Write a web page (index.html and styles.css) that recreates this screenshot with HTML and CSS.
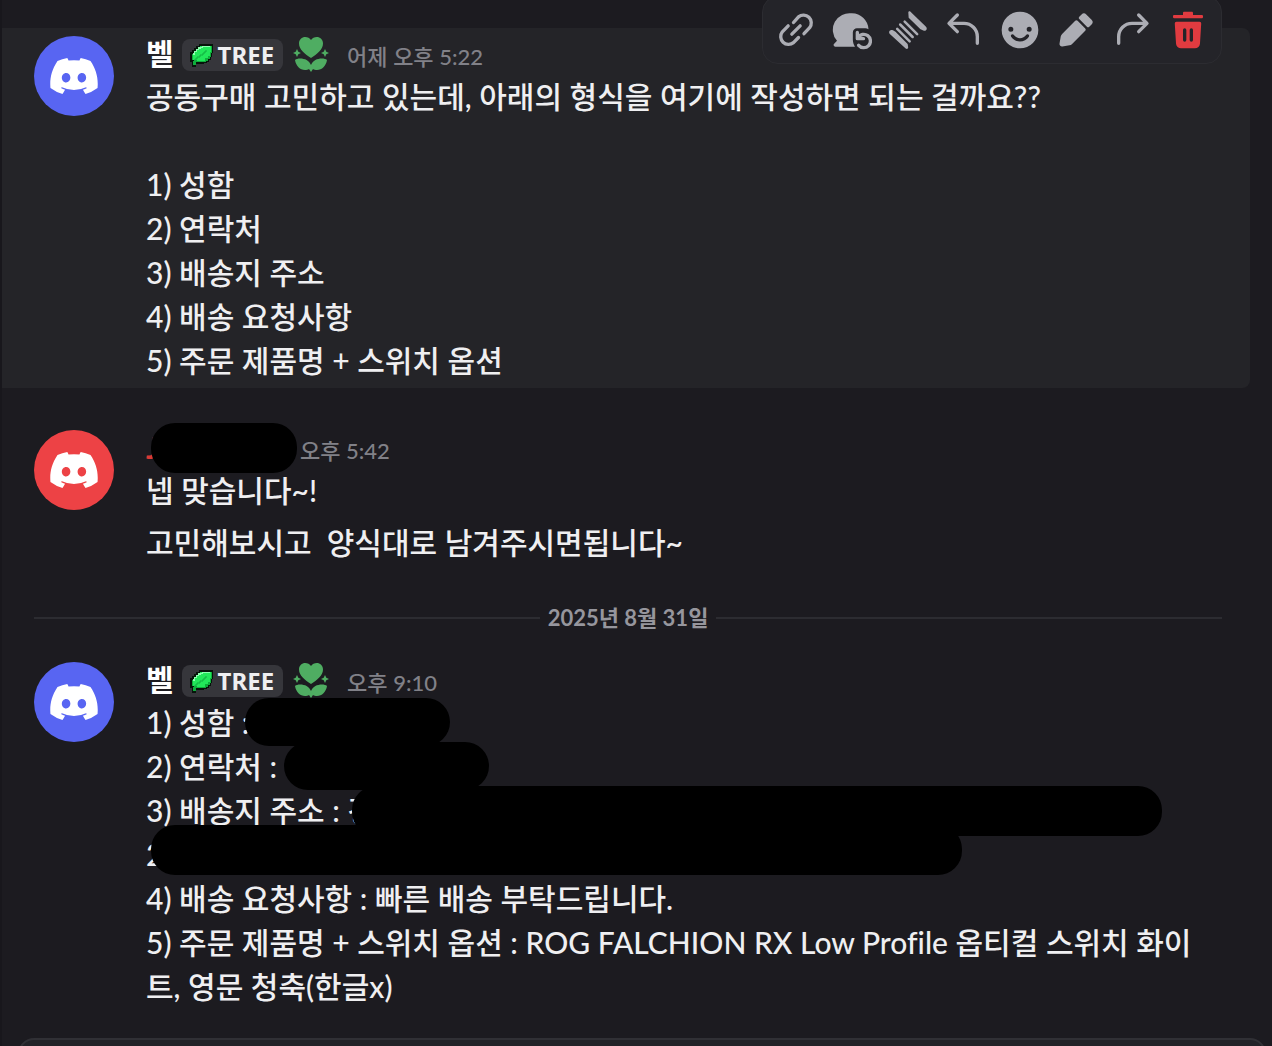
FILE: index.html
```html
<!DOCTYPE html>
<html lang="ko">
<head>
  <meta charset="UTF-8">
  <meta name="viewport" content="width=device-width, initial-scale=1.0">
  <title>Discord</title>
  <link rel="stylesheet" href="styles.css">
</head>
<body>

  <!-- Shared shapes -->
  <svg class="sprites" aria-hidden="true">
    <symbol id="clyde" viewBox="0 0 127.14 96.36">
      <path d="M107.7,8.07A105.15,105.15,0,0,0,81.47,0a72.06,72.06,0,0,0-3.36,6.83A97.68,97.68,0,0,0,49,6.83,72.37,72.37,0,0,0,45.64,0,105.89,105.89,0,0,0,19.39,8.09C2.79,32.65-1.71,56.6.54,80.21h0A105.73,105.73,0,0,0,32.71,96.36,77.7,77.7,0,0,0,39.6,85.25a68.42,68.42,0,0,1-10.85-5.18c.91-.66,1.8-1.34,2.66-2a75.57,75.57,0,0,0,64.32,0c.87.71,1.76,1.39,2.66,2a68.68,68.68,0,0,1-10.87,5.19,77,77,0,0,0,6.89,11.1A105.25,105.25,0,0,0,126.6,80.22h0C129.24,52.84,122.09,29.11,107.7,8.07ZM42.45,65.69C36.18,65.69,31,60,31,53s5-12.74,11.43-12.74S54,46,53.89,53,48.84,65.69,42.45,65.69Zm42.24,0C78.41,65.69,73.25,60,73.25,53s5-12.74,11.44-12.74S96.23,46,96.12,53,91.08,65.69,84.69,65.69Z"/>
    </symbol>
    <symbol id="leaf" viewBox="0 0 24 24">
      <path fill="#06140a" d="M9 1h14v9h-1v4h-1v3h-2v2h-2v1h-3v1H6v3H2v-5H0V9h2V7h2V5h2V3h3z"/>
      <path fill="#0fae3c" d="M10 3h12v7h-1v4h-1v2h-2v2h-2v1H6v3H3v-4h1v-1H2v-6h2V8h2V6h2V4h2z"/>
      <path fill="#22e85a" d="M10 3h11v6h-1v4h-2v2h-3v3H7v-1H3v-6h1V8h2V6h2V4h2z"/>
      <path fill="#8dffb0" d="M12 3h8v1h-7v1h-2v1H9v1H7v2H5v3H3v-2h1V8h2V6h2V4h4z"/>
      <path fill="none" stroke="#10b040" stroke-width="1" d="M5 18v-2h2v-2h3v-2h3v-2h2V8h2"/>
    </symbol>
    <symbol id="sprout" viewBox="0 0 36 36">
      <path d="M18 22C12 18 6 13.500 6 7.500 6 3.500 9 1 12.200 1 14.600 1 16.800 2 18 4c1.200-2 3.400-3 5.800-3C27 1 30 3.500 30 7.500c0 6-6 10.500-12 14.500z"/>
      <path d="M2 24c1-1 3-1.500 5-1.500 5 0 9 2 11 6.500 2-4.500 6-6.500 11-6.500 2 0 4 .5 5 1.500-1 6-5 10-10 10-1.500 0-3-.4-4-1l-2 3-2-3c-1 .6-2.500 1-4 1-5 0-9-4-10-10z"/>
      <path d="M4 13l1.300 2.700L8 17l-2.700 1.300L4 21l-1.300-2.700L0 17l2.700-1.300zM32 13l1.300 2.700L36 17l-2.700 1.300L32 21l-1.300-2.700L28 17l2.700-1.300z"/>
    </symbol>
  </svg>

  <main class="chat">
    <article class="message message-hover">
      <div class="avatar"><svg><use href="#clyde"/></svg></div>
      <div class="body">
        <header class="message-header">
          <span class="username">벨</span>
          <span class="tag"><svg><use href="#leaf"/></svg>TREE</span>
          <svg class="role-icon"><use href="#sprout"/></svg>
          <time>어제 오후 5:22</time>
        </header>
        <p>공동구매 고민하고 있는데, 아래의 형식을 여기에 작성하면 되는 걸까요??</p>
        <p><br></p>
        <p>1) 성함</p>
        <p>2) 연락처</p>
        <p>3) 배송지 주소</p>
        <p>4) 배송 요청사항</p>
        <p>5) 주문 제품명 + 스위치 옵션</p>
      </div>

      <div class="toolbar" role="toolbar">
        <button type="button" aria-label="링크 복사">
          <svg viewBox="0 0 24 24" class="line"><path d="M10.500 7.500l3-3.400a4.700 4.700 0 0 1 6.700 6.500l-3.400 3.600M13.500 16.500l-3 3.100a4.700 4.700 0 0 1-6.700-6.500l3.500-3.600M9.500 14.500l5-5"/></svg>
        </button>
        <button type="button" aria-label="읽지 않음으로 표시">
          <svg viewBox="0 0 24 24"><path d="M12 2a10 10 0 0 1 9.900 9.500c-.6-.3-1.300-.5-1.900-.5h-5a2.500 2.500 0 0 0-2.500 2.500v4c0 1.700.4 3.200 1.300 4.500H2c-1 0-1.400-1.100-.7-1.700L3 18.500A10 10 0 0 1 12 2z"/><path class="stroke" d="M15.200 13.500v3.700h3.700M15.600 16.600a4 4 0 1 1 .4 4.600"/></svg>
        </button>
        <button type="button" aria-label="스레드 만들기">
          <svg viewBox="0 0 24 24"><path d="M12.200 1.700c-.2-.8.700-1.300 1.300-.7l9.300 9c1.200 1.300-.1 3-1.600 2.300l-1.700-.8-7.100-6.900zM1 12.500c.5-.6 1.300-.7 2-.3l1.500.9 7.300 7.300.3 2c.1.900-.9 1.300-1.500.7L1.100 14.400c-.5-.5-.6-1.300-.1-1.900z"/><path class="stroke thin" d="M10 7l7.500 7.500M7.300 8.700l7.500 7.500M5.500 11.300l7.500 7.500"/></svg>
        </button>
        <button type="button" aria-label="답장">
          <svg viewBox="0 0 24 24" class="line"><path d="M8 3L3 8l5 5M3.500 8H12a8 8 0 0 1 8 8v4"/></svg>
        </button>
        <button type="button" aria-label="반응 추가">
          <svg viewBox="0 0 24 24"><path fill-rule="evenodd" d="M12 23a11 11 0 1 0 0-22 11 11 0 0 0 0 22zM6.500 13a1.500 1.500 0 1 0 0-3 1.500 1.500 0 0 0 0 3zm11 0a1.500 1.500 0 1 0 0-3 1.500 1.500 0 0 0 0 3zm-9.170 1.950a1 1 0 0 0-1.660 1.100 6.400 6.400 0 0 0 10.660 0 1 1 0 0 0-1.660-1.100 4.400 4.400 0 0 1-7.340 0z"/></svg>
        </button>
        <button type="button" aria-label="수정">
          <svg viewBox="0 0 24 24"><path d="M13.960 5.460l4.580 4.580a1 1 0 0 0 1.420 0l1.380-1.380a2 2 0 0 0 0-2.820l-3.180-3.180a2 2 0 0 0-2.820 0l-1.380 1.380a1 1 0 0 0 0 1.420zM2.110 20.160l.73-4.220a3 3 0 0 1 .83-1.610l7.870-7.870a1 1 0 0 1 1.420 0l4.580 4.580a1 1 0 0 1 0 1.420l-7.870 7.870a3 3 0 0 1-1.600.83l-4.230.73a1.500 1.500 0 0 1-1.730-1.730z"/></svg>
        </button>
        <button type="button" aria-label="전달">
          <svg viewBox="0 0 24 24" class="line"><path d="M16 3l5 5-5 5M20.500 8H12a8 8 0 0 0-8 8v4"/></svg>
        </button>
        <button type="button" class="danger" aria-label="삭제">
          <svg viewBox="0 0 24 24"><path d="M14.250 1c.41 0 .75.340.75.750V3h5.250c.41 0 .75.340.75.750v.5c0 .41-.34.750-.75.750H3.750A.75.750 0 0 1 3 4.250v-.5c0-.41.340-.75.750-.75H9V1.750c0-.41.340-.75.750-.75h4.500z"/><path fill-rule="evenodd" d="M5.060 7a1 1 0 0 0-1 1.060l.76 12.130a3 3 0 0 0 3 2.810h8.360a3 3 0 0 0 3-2.810l.75-12.130a1 1 0 0 0-1-1.060H5.060zM11 12a1 1 0 1 0-2 0v6a1 1 0 1 0 2 0v-6zm3-1a1 1 0 0 1 1 1v6a1 1 0 1 1-2 0v-6a1 1 0 0 1 1-1z"/></svg>
        </button>
      </div>
    </article>

    <article class="message message-start">
      <div class="avatar avatar-red"><svg><use href="#clyde"/></svg></div>
      <div class="body">
        <header class="message-header">
          <span class="username username-red">J<span class="redact redact-name"></span></span>
          <time>오후 5:42</time>
        </header>
        <p>넵 맞습니다~!</p>
      </div>
    </article>
    <article class="message message-compact">
      <div class="body">
        <p>고민해보시고&nbsp; 양식대로 남겨주시면됩니다~</p>
      </div>
    </article>

    <div class="divider"><span>2025년 8월 31일</span></div>

    <article class="message">
      <div class="avatar"><svg><use href="#clyde"/></svg></div>
      <div class="body">
        <header class="message-header">
          <span class="username">벨</span>
          <span class="tag"><svg><use href="#leaf"/></svg>TREE</span>
          <svg class="role-icon"><use href="#sprout"/></svg>
          <time>오후 9:10</time>
        </header>
        <p>1) 성함 :<span class="redact redact-person"></span></p>
        <p>2) 연락처 :<span class="redact redact-phone"></span></p>
        <p>3) 배송지 주소 : 경<span class="redact redact-address"></span></p>
        <p>2<span class="redact redact-address-end"></span></p>
        <p>4) 배송 요청사항 : 빠른 배송 부탁드립니다.</p>
        <p>5) 주문 제품명 + 스위치 옵션 : ROG FALCHION RX Low Profile 옵티컬 스위치 화이트, 영문 청축(한글x)</p>
      </div>
    </article>
  </main>

  <footer class="composer-area">
    <div class="composer"></div>
  </footer>

</body>
</html>
```

FILE: styles.css
```css
* {
  box-sizing: border-box;
}

body {
  margin: 0;
  height: 100vh;
  overflow: hidden;
  display: flex;
  flex-direction: column;
  background-color: #1c1b20;
  border-left: 2px solid #18171c;
  color: #efeff1;
  font-family: Lato, "Noto Sans CJK KR", sans-serif;
  font-size: 30px;
  font-weight: 500;
  font-variant-ligatures: none;
  line-height: 44px;
}

.sprites {
  display: none;
}

.chat {
  flex-shrink: 0;
  padding: 28px 22px 20px 0;
}

.message {
  position: relative;
  display: flex;
  gap: 32px;
  padding: 2px 48px 6px 32px;
}

.message-hover {
  background-color: #242428;
  border-radius: 0 8px 8px 0;
}

.message-start {
  margin-top: 34px;
}

.message-compact {
  padding-left: 144px;
}

.avatar {
  display: flex;
  flex-shrink: 0;
  align-items: center;
  justify-content: center;
  width: 80px;
  height: 80px;
  margin-top: 6px;
  border-radius: 50%;
  background-color: #5865f2;
}

.avatar-red {
  background-color: #ed4245;
}

.avatar svg {
  width: 48px;
  height: 36px;
  fill: #fff;
}

.body {
  flex: 1;
  min-width: 0;
}

.body p {
  position: relative;
  margin: 0;
  word-break: break-all;
}

.message-header {
  display: flex;
  align-items: center;
  height: 44px;
  padding-top: 2px;
}

.username {
  position: relative;
  font-weight: 700;
  color: #fff;
}

.username-red {
  width: 154px;
  color: #d83a35;
}

.tag {
  display: flex;
  align-items: center;
  gap: 4px;
  height: 32px;
  margin: 4px 0 0 8px;
  padding: 0 9px 0 8px;
  border-radius: 8px;
  background-color: #36363b;
  font-family: "Noto Sans", sans-serif;
  font-size: 24px;
  font-weight: 700;
}

.tag svg {
  width: 24px;
  height: 24px;
}

.role-icon {
  width: 36px;
  height: 36px;
  margin: 2px 18px 0 10px;
  fill: #4fad62;
}

time {
  color: #818188;
  font-size: 22px;
  padding-top: 8px;
}

/* Blacked-out private details */
.redact {
  position: absolute;
  top: -2px;
  height: 48px;
  border-radius: 24px;
  background-color: #000;
  z-index: 1;
}

.redact-name {
  left: 5px;
  width: 146px;
  height: 50px;
}

.redact-person {
  left: 99px;
  width: 205px;
}

.redact-phone {
  left: 138px;
  width: 205px;
}

.redact-address {
  left: 206px;
  width: 810px;
  height: 50px;
}

.redact-address-end {
  top: -7px;
  left: 5px;
  width: 811px;
  height: 50px;
}

.toolbar {
  position: absolute;
  top: -32px;
  right: 28px;
  display: flex;
  padding: 3px 5px;
  border: 1px solid #2c2c31;
  border-radius: 16px;
  background-color: #242429;
}

.toolbar button {
  width: 56px;
  height: 60px;
  padding: 4px 8px;
  border: none;
  background: none;
  color: #acadb4;
  cursor: pointer;
}

.toolbar .danger {
  color: #e13b40;
}

.toolbar svg {
  display: block;
  width: 40px;
  height: 40px;
  fill: currentColor;
}

.toolbar .line,
.toolbar .stroke {
  fill: none;
  stroke: currentColor;
  stroke-width: 2;
  stroke-linecap: round;
  stroke-linejoin: round;
}

.toolbar .thin {
  stroke-width: 1.500;
}

.divider {
  display: flex;
  align-items: center;
  gap: 8px;
  margin: 26px 28px 14px 32px;
  color: #96969d;
  font-size: 22px;
  font-weight: 700;
}

.divider::before,
.divider::after {
  content: "";
  flex: 1;
  height: 2px;
  background-color: #2c2c31;
}

.composer-area {
  flex: 1;
  min-height: 0;
  overflow: hidden;
  padding: 4px 6px 0 16px;
}

.composer {
  height: 60px;
  border: 2px solid #303035;
  border-radius: 16px;
  background-color: #222227;
}
```
